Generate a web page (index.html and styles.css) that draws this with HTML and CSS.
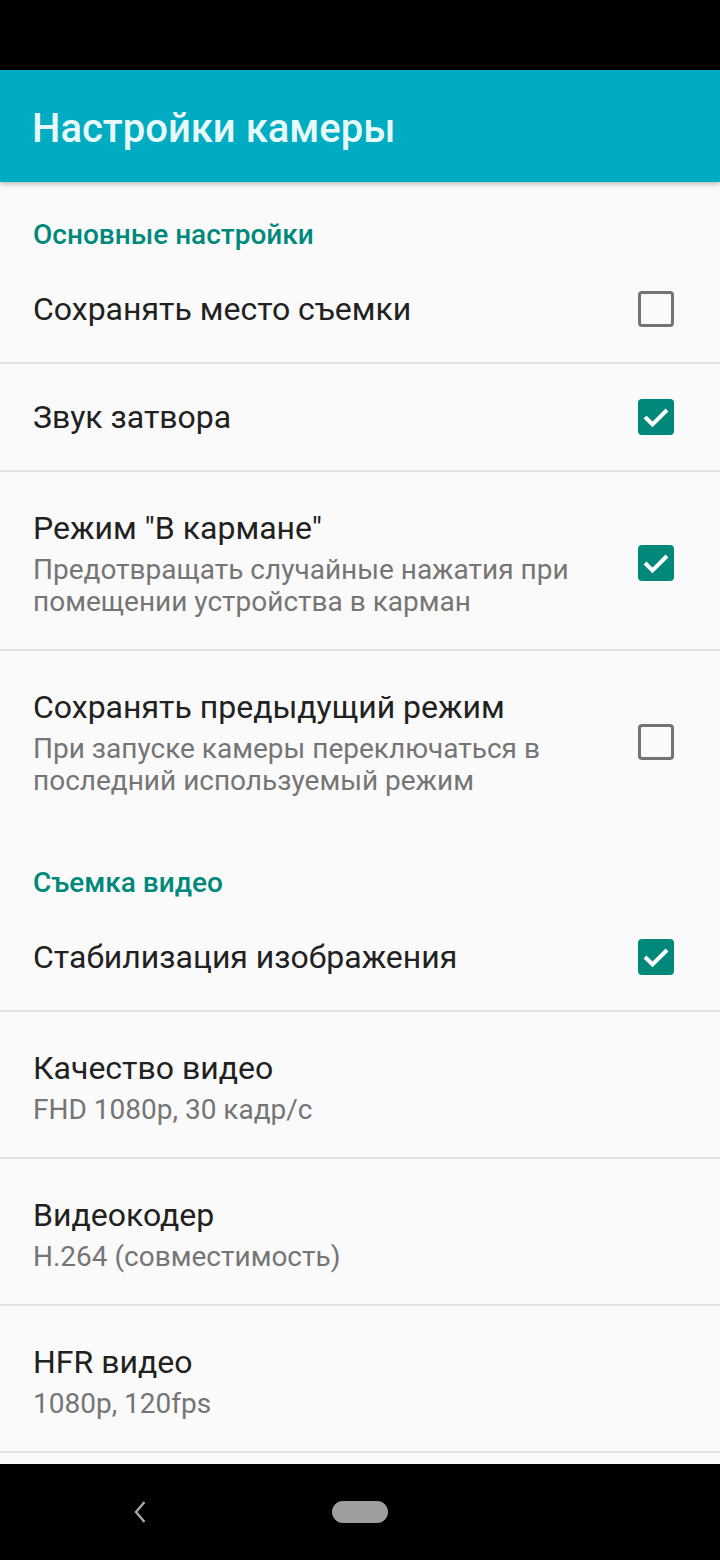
FILE: index.html
```html
<!DOCTYPE html>
<html lang="ru">
<head>
  <meta charset="UTF-8" />
  <meta name="viewport" content="width=device-width, initial-scale=1.0"/>
  <title>Настройки камеры</title>
  <link rel="stylesheet" href="styles.css">
</head>
<body>
  <div class="screen">
    <div class="status-bar"></div>

    <header class="toolbar">
      <h1>Настройки камеры</h1>
    </header>

    <div class="prefs">
      <div class="category">Основные настройки</div>

      <div class="pref divider">
        <div class="pref-text">
          <div class="pref-title">Сохранять место съемки</div>
        </div>
        <span class="checkbox"></span>
      </div>

      <div class="pref divider">
        <div class="pref-text">
          <div class="pref-title">Звук затвора</div>
        </div>
        <span class="checkbox checked">
          <svg viewBox="0 0 36 36" width="36" height="36"><polyline points="7,18 14.5,25.5 29,11" /></svg>
        </span>
      </div>

      <div class="pref with-summary divider">
        <div class="pref-text">
          <div class="pref-title">Режим "В кармане"</div>
          <div class="pref-summary">Предотвращать случайные нажатия при помещении устройства в карман</div>
        </div>
        <span class="checkbox checked">
          <svg viewBox="0 0 36 36" width="36" height="36"><polyline points="7,18 14.5,25.5 29,11" /></svg>
        </span>
      </div>

      <div class="pref with-summary">
        <div class="pref-text">
          <div class="pref-title">Сохранять предыдущий режим</div>
          <div class="pref-summary">При запуске камеры переключаться в последний используемый режим</div>
        </div>
        <span class="checkbox"></span>
      </div>

      <div class="category">Съемка видео</div>

      <div class="pref divider">
        <div class="pref-text">
          <div class="pref-title">Стабилизация изображения</div>
        </div>
        <span class="checkbox checked">
          <svg viewBox="0 0 36 36" width="36" height="36"><polyline points="7,18 14.5,25.5 29,11" /></svg>
        </span>
      </div>

      <div class="pref with-summary divider">
        <div class="pref-text">
          <div class="pref-title">Качество видео</div>
          <div class="pref-summary">FHD 1080p, 30 кадр/с</div>
        </div>
      </div>

      <div class="pref with-summary divider">
        <div class="pref-text">
          <div class="pref-title">Видеокодер</div>
          <div class="pref-summary">H.264 (совместимость)</div>
        </div>
      </div>

      <div class="pref with-summary divider">
        <div class="pref-text">
          <div class="pref-title">HFR видео</div>
          <div class="pref-summary">1080p, 120fps</div>
        </div>
      </div>
    </div>

    <nav class="nav-bar">
      <svg class="nav-back" viewBox="0 0 12 22" width="12" height="22"><polyline points="10.5,1 2,11 10.5,21" /></svg>
      <span class="nav-home"></span>
      <span class="nav-spacer"></span>
    </nav>
  </div>
</body>
</html>
```

FILE: styles.css
```css
body {
  margin: 0;
  padding: 0;
  font-family: Roboto, "Noto Sans", sans-serif;
  background-color: #fafafa;
}

.screen {
  width: 720px;
  height: 1560px;
  display: flex;
  flex-direction: column;
  overflow: hidden;
}

.status-bar {
  height: 70px;
  background-color: #000;
}

.toolbar {
  height: 112px;
  background-color: #00acc1;
  display: flex;
  align-items: center;
  padding: 0 32px;
  box-shadow: 0 2px 5px rgba(0, 0, 0, 0.25);
  position: relative;
  z-index: 1;
}

.toolbar h1 {
  margin: 4px 0 0;
  font-size: 40px;
  font-weight: 500;
  color: #e8f9fb;
}

.prefs {
  flex: 1;
  overflow: hidden;
}

.category {
  padding: 37px 33px 5px;
  line-height: 32px;
  font-size: 28px;
  font-weight: 500;
  color: #00897b;
}

.pref {
  display: flex;
  align-items: center;
  padding: 33px 46px 33px 33px;
  border-bottom: 2px solid transparent;
}

.pref.with-summary {
  padding-top: 36px;
  padding-bottom: 31px;
}

.pref.divider {
  border-bottom-color: #e2e2e2;
}

.pref-text {
  flex: 1;
}

.pref-title {
  font-size: 32px;
  line-height: 40px;
  color: #212121;
}

.pref-summary {
  margin-top: 6px;
  max-width: 545px;
  font-size: 28px;
  line-height: 32px;
  color: #757575;
}

.checkbox {
  width: 36px;
  height: 36px;
  box-sizing: border-box;
  border: 3.5px solid #737373;
  border-radius: 4px;
  flex-shrink: 0;
  margin-left: 20px;
}

.checkbox.checked {
  border: none;
  background-color: #00897b;
}

.checkbox svg {
  display: block;
}

.checkbox polyline {
  fill: none;
  stroke: #fff;
  stroke-width: 4;
}

.nav-bar {
  height: 96px;
  background-color: #000;
  display: grid;
  grid-template-columns: 1fr 1fr 1fr;
  align-items: center;
  justify-items: center;
  padding: 0 30px;
  margin-top: 10px;
}

.nav-back polyline {
  fill: none;
  stroke: #a8a8a8;
  stroke-width: 2.4;
}

.nav-home {
  width: 56px;
  height: 22px;
  border-radius: 11px;
  background-color: #9e9e9e;
}

.nav-spacer {
  width: 12px;
}
```
